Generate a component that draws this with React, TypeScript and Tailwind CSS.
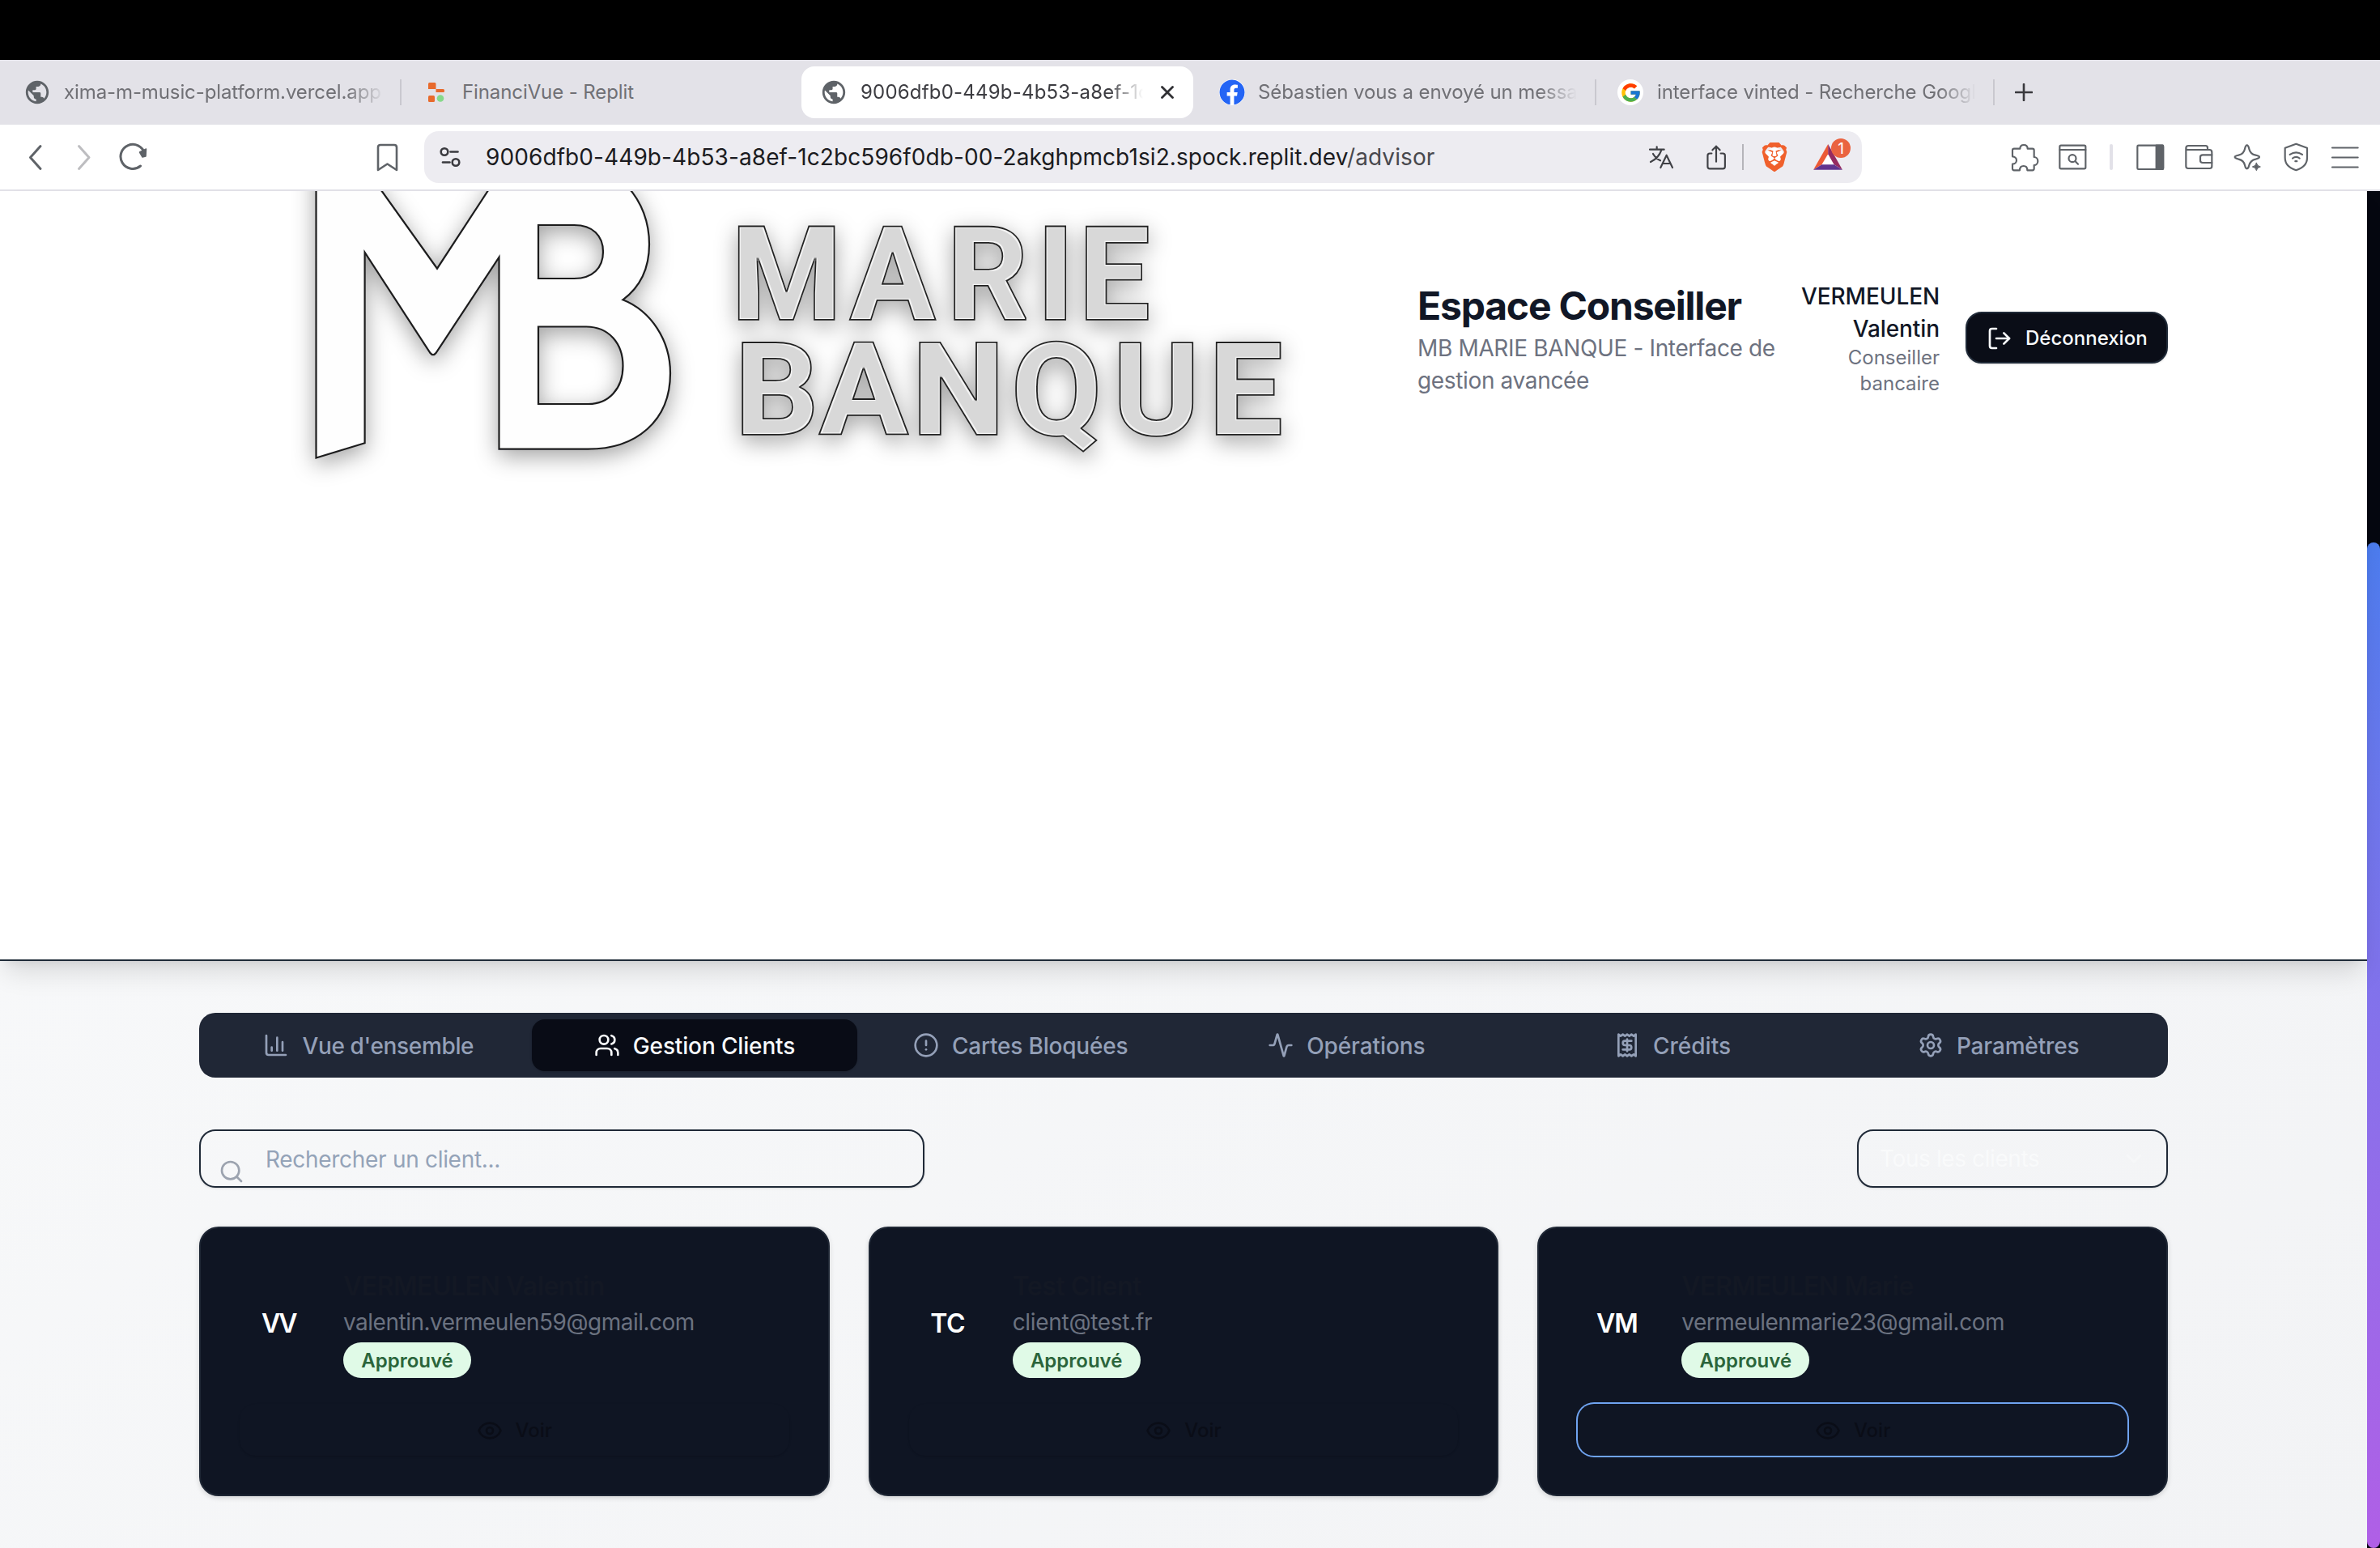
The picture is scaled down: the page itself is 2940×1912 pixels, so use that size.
import type { ReactNode } from "react";
import { Activity, ChartColumn, ChevronDown, CircleAlert, Eye, LogOut, Search, Settings, Users } from "lucide-react";
import { FcGoogle } from "react-icons/fc";
import { FaFacebook } from "react-icons/fa";
import { MdPublic } from "react-icons/md";
import { SiBrave } from "react-icons/si";

/* ---------- Browser chrome ---------- */

function Globe() {
  return <MdPublic className="-m-[3px] size-[34px] shrink-0 text-[#5f6368]" />;
}

function ReplitMark() {
  return (
    <svg className="h-6 w-5 shrink-0" viewBox="0 0 20 24">
      <path d="M0 1.5Q0 0 1.5 0H8Q9.500 0 9.500 1.500V8H0Z" fill="#e86a2c" />
      <path d="M9.500 8H18.500Q20 8 20 9.500V11Q20 12 18.500 12H9.500Z" fill="#e86a2c" />
      <rect y="16" width="8" height="8" rx="1.500" fill="#e86a2c" />
      <circle cx="15" cy="19.500" r="4.300" fill="#86d98a" />
    </svg>
  );
}

function TabSeparator() {
  return <div className="h-8 w-0.5 shrink-0 bg-[#c9c8cf]" />;
}

function TabBar() {
  const fade = "overflow-hidden whitespace-nowrap [mask-image:linear-gradient(to_right,black_88%,transparent)]";
  return (
    <div className="flex h-20 items-center bg-[#e3e2e8] text-2xl text-[#707075]">
      <div className="flex w-[494px] items-center pl-8">
        <Globe />
        <span className={`${fade} ml-[19px] w-[396px] tracking-[-0.1px]`}>xima-m-music-platform.vercel.app</span>
      </div>
      <TabSeparator />
      <div className="flex w-[494px] items-center pl-[33px]">
        <ReplitMark />
        <span className="ml-[22px] tracking-[-0.1px] whitespace-nowrap">FinanciVue - Replit</span>
      </div>
      <div className="flex h-16 w-[484px] items-center rounded-[16px] bg-white pl-[26px] text-[#3c3c41]">
        <Globe />
        <span className={`${fade} ml-[19px] w-[349px] tracking-[0.2px]`}>9006dfb0-449b-4b53-a8ef-1c</span>
        <svg className="ml-[22px] size-4" viewBox="0 0 16 16" stroke="#303034" strokeWidth="2.800" strokeLinecap="round">
          <path d="M1.500 1.500 14.500 14.500M14.500 1.500 1.500 14.500" />
        </svg>
      </div>
      <div className="flex w-[496px] items-center pl-8">
        <FaFacebook className="size-8 shrink-0 rounded-full bg-white text-[#2465f5]" />
        <span className={`${fade} ml-[16px] w-[394px] tracking-[-0.1px]`}>Sébastien vous a envoyé un messa</span>
      </div>
      <TabSeparator />
      <div className="flex w-[490px] items-center pl-[26px]">
        <div className="flex size-8 shrink-0 items-center justify-center rounded-full bg-white">
          <FcGoogle className="size-[27px]" />
        </div>
        <span className={`${fade} ml-[17px] w-[394px] tracking-[-0.1px]`}>interface vinted - Recherche Googl</span>
      </div>
      <TabSeparator />
      <svg className="ml-[25px] size-[22px]" viewBox="0 0 22 22" stroke="#3a3a3e" strokeWidth="2.600" strokeLinecap="round">
        <path d="M11 1V21M1 11H21" />
      </svg>
    </div>
  );
}

function Glyph({ box, className, children }: { box: string; className: string; children: ReactNode }) {
  return (
    <svg
      viewBox={box}
      className={`shrink-0 ${className}`}
      fill="none"
      stroke="#5f6368"
      strokeWidth="6.500"
      strokeLinecap="round"
      strokeLinejoin="round"
    >
      {children}
    </svg>
  );
}

function Toolbar() {
  return (
    <div className="flex h-[82px] items-center border-b-2 border-[#e2e1e8] bg-white">
      <svg className="ml-[34px] h-9 w-[150px]" viewBox="34 175.500 150 36" fill="none" stroke="#5f6368" strokeWidth="3" strokeLinecap="round" strokeLinejoin="round">
        <path d="M50 180 37.500 194 50 208" />
        <path d="M97.500 180 110 194 97.500 208" stroke="#bdbdc0" />
        <path d="M173.500 204.500A15 15 0 1 1 178.500 189" />
        <path d="M172.500 187.500 180.500 183.500 180 192.500 176 193.500Z" fill="#5f6368" strokeWidth="1.500" />
      </svg>
      <svg className="ml-[281px] h-[35px] w-[27px]" viewBox="0 0 27 35" fill="none" stroke="#5f6368" strokeWidth="2.600" strokeLinejoin="round">
        <path d="M2 5Q2 2 5 2H22Q25 2 25 5V33L13.500 25.500 2 33Z" />
      </svg>

      <div className="ml-[32px] flex h-16 w-[1776px] items-center rounded-[18px] bg-[#edecf1]">
        <svg className="ml-[18px] h-7 w-[30px]" viewBox="0 0 30 28" fill="none" stroke="#3a3a3f" strokeWidth="2.600" strokeLinecap="round">
          <circle cx="7" cy="7.500" r="4.300" />
          <path d="M14.500 7.500H23.500" />
          <circle cx="21" cy="20.500" r="4.300" />
          <path d="M5 20.500H13.500" />
        </svg>
        <div className="ml-[28px] w-[1436px] text-[28px] tracking-[0.09px] whitespace-nowrap text-[#1b1b20]">
          9006dfb0-449b-4b53-a8ef-1c2bc596f0db-00-2akghpmcb1si2.spock.replit.dev
          <span className="text-[#48484d]">/advisor</span>
        </div>
        <Glyph box="48 50 96 90" className="h-[30px] w-8">
          <g stroke="#404146">
            <path d="M54 67H107M80 57V67M97 69C91 86 78 103 57 113M66 83C73 95 84 104 93 108" />
            <path d="M94 134 116 88 138 134M102 119H130" />
          </g>
        </Glyph>
        <Glyph box="261 42 78 100" className="ml-[39px] h-[33px] w-[26px]">
          <g stroke="#404146">
            <path d="M283 77H276Q268 77 268 85V126Q268 134 276 134H325Q333 134 333 126V85Q333 77 325 77H317" />
            <path d="M300 108V50M286 64 300 50 314 64" />
          </g>
        </Glyph>
        <div className="ml-[19px] h-8 w-0.5 bg-[#b5b4ba]" />
        <div className="ml-[20px] flex size-9 items-center justify-center bg-[radial-gradient(circle,white_45%,transparent_46%)]">
          <SiBrave className="size-9 text-[#f0602c]" />
        </div>
        <div className="relative ml-[30px] h-8 w-9">
          <svg className="size-full" viewBox="666 46 107 95">
            <path d="M720 46 773 140H666Z" fill="#fff" />
            <path d="M720 46V82L697 121 666 140Z" fill="#ec5a35" />
            <path d="M720 46 773 140 742 121 720 82Z" fill="#962b60" />
            <path d="M666 140 697 121H742L773 140Z" fill="#61348f" />
          </svg>
          <span className="absolute -top-[7px] left-[22px] flex size-6 items-center justify-center rounded-full bg-[#ea6340] text-[19px] leading-none text-white">
            1
          </span>
        </div>
      </div>

      <Glyph box="42 27 105 105" className="ml-[184px] size-[35px]">
        <path d="M48 53Q48 47 54 47H76C76 38 82 33 90 33S104 38 104 47H122Q128 47 128 53V78C136 78 142 85 142 93S136 108 128 108V121Q128 127 122 127H103C103 117 97 111 89 111S75 117 75 127H54Q48 127 48 121V104C57 104 63 98 63 90S57 76 48 76Z" />
      </Glyph>
      <Glyph box="218 33 105 102" className="ml-[24px] h-[34px] w-[35px]">
        <rect x="222" y="41" width="96" height="86" rx="5" />
        <path d="M222 57H318M280 100 290 110" />
        <circle cx="269" cy="89" r="13.500" />
      </Glyph>
      <div className="ml-[28px] h-8 w-1 rounded-full bg-[#e2e1e8]" />
      <Glyph box="506 33 105 102" className="ml-[29px] h-[34px] w-[35px]">
        <rect x="510" y="41" width="96" height="88" rx="4" />
        <path d="M580 41H604V129H580Z" fill="#5f6368" />
      </Glyph>
      <Glyph box="686 33 105 102" className="ml-[25px] h-[34px] w-[35px]">
        <path d="M690 51V118Q690 126 698 126H778Q786 126 786 118V66Q786 57 777 57H696Q690 57 690 51 690 42 699 42H763Q770 42 770 50V56" />
        <path d="M786 76H752Q743 76 743 84V97Q743 105 752 105H786" />
      </Glyph>
      <Glyph box="865 30 105 105" className="ml-[25px] size-[35px]">
        <path d="M915 37c5 0 6 4 8 14 3 14 10 20 24 23 10 2 14 3 14 7s-4 5-14 8c-14 3-20 9-24 22-2 9-4 13-8 13s-6-4-8-13c-3-13-10-19-23-22-10-3-14-4-14-8s4-5 14-7c13-3 20-9 23-23 2-10 3-14 8-14Z" />
        <path d="M950 103Q952 115 965 117 952 119 950 131 948 119 935 117 948 115 950 103Z" fill="#5f6368" strokeWidth="3" />
      </Glyph>
      <Glyph box="1049 30 99 107" className="ml-[26px] h-9 w-[33px]">
        <path d="M1098 35 1139 50V86C1139 110 1122 125 1098 132 1074 125 1057 110 1057 86V50Z" />
        <path d="M1075 74Q1098 59 1121 74M1085 88Q1098 78 1111 88M1095 99H1101" />
      </Glyph>
      <Glyph box="1225 37 108 92" className="ml-[26px] h-[31px] w-9">
        <path d="M1231 47H1326M1231 83H1326M1231 119H1326" strokeWidth="6.500" />
      </Glyph>
    </div>
  );
}

/* ---------- Bank brand ---------- */

function BankLogo() {
  return (
    <svg className="ml-[94px] h-[400px] w-[1300px] shrink-0 self-start" viewBox="340 236 1300 400">
      <defs>
        <filter id="logo-shadow" filterUnits="userSpaceOnUse" x="300" y="100" width="1400" height="560">
          <feDropShadow dx="0" dy="8" stdDeviation="14" floodColor="#000" floodOpacity="0.360" />
        </filter>
        <filter id="inner-fill" filterUnits="userSpaceOnUse" x="850" y="240" width="800" height="380" colorInterpolationFilters="sRGB">
          <feMorphology in="SourceAlpha" operator="erode" radius="3" result="core" />
          <feFlood floodColor="#d8d8d8" />
          <feComposite in2="core" operator="in" result="grey" />
          <feMerge>
            <feMergeNode in="SourceGraphic" />
            <feMergeNode in="grey" />
          </feMerge>
        </filter>
      </defs>
      <g filter="url(#logo-shadow)">
        <path
          d="M390.500 200H446L540 331.700 626 200H700C765 200 802 248 802 301.700 802 332 790 355 769.400 370.300 804 384 828 420 828 461 828 520 786 554.700 726 554.700H616.500V317.700L538.500 436Q535 440.500 531.500 436L450.600 311.700V547.300L390.500 565.500ZM665 278V344H709.400C732 344 745 331 745 311S732 278 709.400 278ZM665 403.500V499H727C752 499 769.500 480 769.500 452S752 403.500 724 403.500Z"
          fill="#fefefe"
          fillRule="evenodd"
          stroke="#1d1d1f"
          strokeWidth="2.200"
        />
        <g
          filter="url(#inner-fill)"
          fontFamily="Roboto, sans-serif"
          fontWeight="700"
          fill="#f2f2f2"
          stroke="#222"
          strokeWidth="3.600"
          paintOrder="stroke"
          strokeLinejoin="miter"
        >
          <text transform="scale(0.970 1)" x="931.600 1082.900 1206.400 1320.800 1374.200" y="394.400" fontSize="160">MARIE</text>
          <text transform="scale(1.020 1)" x="890.300 993 1105 1225.100 1348.300 1464.300" y="536.200" fontSize="158">BANQUE</text>
        </g>
      </g>
    </svg>
  );
}

function Header() {
  return (
    <header className="relative h-[951px] border-b-2 border-[#1f2b38] bg-white shadow-[0_20px_30px_-6px_rgba(0,0,0,0.12),0_8px_12px_-8px_rgba(0,0,0,0.1)]">
      <div className="mx-[246px] flex h-[362px] items-center">
        <BankLogo />
        <div className="mt-0.5 ml-[111px] w-[450px] shrink-0">
          <h1 className="text-5xl leading-[64px] font-bold tracking-[-1.2px] text-[#111726]">Espace Conseiller</h1>
          <p className="text-[28px] leading-10 tracking-[-0.35px] text-[#6d7280]">
            MB MARIE BANQUE - Interface de gestion avancée
          </p>
        </div>
        <div className="mt-px ml-auto w-[186px] shrink-0 text-right">
          <p className="text-[28px] leading-10 font-medium tracking-[-0.1px] text-[#111726]">
            VERMEULEN
            <br />
            Valentin
          </p>
          <p className="text-2xl text-[#6d7280]">
            Conseiller
            <br />
            bancaire
          </p>
        </div>
        <button className="ml-8 flex h-16 w-[250px] shrink-0 items-center rounded-[20px] border-2 border-[#1f2937] bg-[#0a0d17] pt-px pl-6 text-2xl font-medium text-[#f8fafc] shadow-sm">
          <LogOut className="mr-4 size-8" />
          Déconnexion
        </button>
      </div>
    </header>
  );
}

/* ---------- Page body ---------- */

function Receipt({ className }: { className?: string }) {
  return (
    <svg className={className} viewBox="0 0 32 32" fill="none" stroke="currentColor" strokeWidth="2.667" strokeLinecap="round" strokeLinejoin="round">
      <path d="M5.333 2.667V29.333L8 27.333 10.667 29.333 13.333 27.333 16 29.333 18.667 27.333 21.333 29.333 24 27.333 26.667 29.333V2.667L24 4.667 21.333 2.667 18.667 4.667 16 2.667 13.333 4.667 10.667 2.667 8 4.667Z" />
      <path d="M21.333 10.667H13.333A2.667 2.667 0 0 0 13.333 16H18.667A2.667 2.667 0 0 1 18.667 21.333H10.667" />
      <path d="M16 23.333V8.667" />
    </svg>
  );
}

const TABS = [
  { label: "Vue d'ensemble", Icon: ChartColumn, tracking: "tracking-[-0.35px]" },
  { label: "Gestion Clients", Icon: Users, tracking: "tracking-[-0.15px]", active: true },
  { label: "Cartes Bloquées", Icon: CircleAlert, tracking: "tracking-[-0.2px]" },
  { label: "Opérations", Icon: Activity, tracking: "tracking-[-0.1px]" },
  { label: "Crédits", Icon: Receipt, tracking: "tracking-normal" },
  { label: "Paramètres", Icon: Settings, tracking: "tracking-[-0.15px]" },
];

function SectionTabs() {
  return (
    <nav className="grid h-20 grid-cols-6 rounded-[20px] bg-[#202736] p-2 text-[28px] font-medium text-[#94a0b8]">
      {TABS.map(({ label, Icon, tracking, active }) => (
        <div
          key={label}
          className={`flex items-center justify-center gap-4 rounded-[16px] ${tracking} ${active ? "bg-[#090c16] text-[#f8fafc] shadow-sm" : ""}`}
        >
          <Icon className="size-8" />
          <span className="pt-px">{label}</span>
        </div>
      ))}
    </nav>
  );
}

function Filters() {
  return (
    <div className="mt-16 flex justify-between text-[28px]">
      <div className="relative flex h-[72px] w-[896px] items-center rounded-[20px] border-2 border-[#1f2937] pt-0.5 pl-20 tracking-[-0.3px] text-[#94a3b8] shadow-sm">
        <Search className="absolute top-[34px] left-[22px] size-8 text-[#9ca3af]" />
        Rechercher un client...
      </div>
      <div className="flex h-[72px] w-[384px] items-center justify-between rounded-[20px] border-2 border-[#1f2937] pr-6 pl-[26px] tracking-[-0.4px] text-[#f9fafb] shadow-sm">
        Tous les clients
        <ChevronDown className="size-8 opacity-50" />
      </div>
    </div>
  );
}

const CLIENTS = [
  { initials: "VV", name: "VERMEULEN Valentin", email: "valentin.vermeulen59@gmail.com", kerning: "tracking-[-2.5px]", emailTracking: "tracking-[-0.5px]" },
  { initials: "TC", name: "Test Client", email: "client@test.fr", kerning: "tracking-[-0.4px]", emailTracking: "tracking-[-0.3px]" },
  { initials: "VM", name: "VERMEULEN Marie", email: "vermeulenmarie23@gmail.com", kerning: "tracking-[-1px]", emailTracking: "tracking-[-0.5px]", focused: true },
];

function ClientCard({ initials, name, email, kerning, emailTracking, focused }: (typeof CLIENTS)[number]) {
  return (
    <article className="h-[333px] rounded-3xl border-2 border-[#1f2735] bg-[#0f1523] p-12 shadow-[0_2px_6px_rgba(0,0,0,0.15)]">
      <div className="flex items-center gap-8">
        <div className={`flex size-24 items-center justify-center pt-0.5 text-[32px] font-semibold text-white ${kerning}`}>{initials}</div>
        <div className="h-[137px]">
          <h3 className="text-[32px] leading-[48px] font-semibold tracking-[-0.5px] text-[#131824]">{name}</h3>
          <p className={`text-[28px] leading-10 text-[#6b7280] ${emailTracking}`}>{email}</p>
          <span className="mt-[5px] flex h-11 w-[158px] items-center justify-center rounded-full bg-[#e0fae7] pt-px text-2xl font-semibold text-[#2b653b]">
            Approuvé
          </span>
        </div>
      </div>
      <button
        className={`mt-8 flex h-16 w-full items-center justify-center gap-4 rounded-[20px] pt-px text-2xl font-medium text-[#0a0d17] ${focused ? "ring-2 ring-[#6fa3f0]" : "shadow-sm"}`}
      >
        <Eye className="size-8" />
        Voir
      </button>
    </article>
  );
}

export default function App() {
  return (
    <div className="flex h-[1912px] w-[2940px] flex-col overflow-hidden bg-white font-['Inter',sans-serif]">
      <div className="h-[74px] shrink-0 bg-black" />
      <TabBar />
      <Toolbar />
      <div className="flex min-h-0 flex-1">
        <div className="flex-1 bg-linear-to-br from-[#f9fafb] to-[#f2f3f5]">
          <Header />
          <main className="mx-[246px] mt-16">
            <SectionTabs />
            <Filters />
            <div className="mt-12 grid grid-cols-3 gap-12">
              {CLIENTS.map((client) => (
                <ClientCard key={client.email} {...client} />
              ))}
            </div>
          </main>
        </div>
        <div className="w-4 shrink-0 bg-[#050710] pt-[434px]">
          <div className="h-full rounded-full bg-linear-to-b from-[#4c7df0] to-[#b05fe6]" />
        </div>
      </div>
    </div>
  );
}
